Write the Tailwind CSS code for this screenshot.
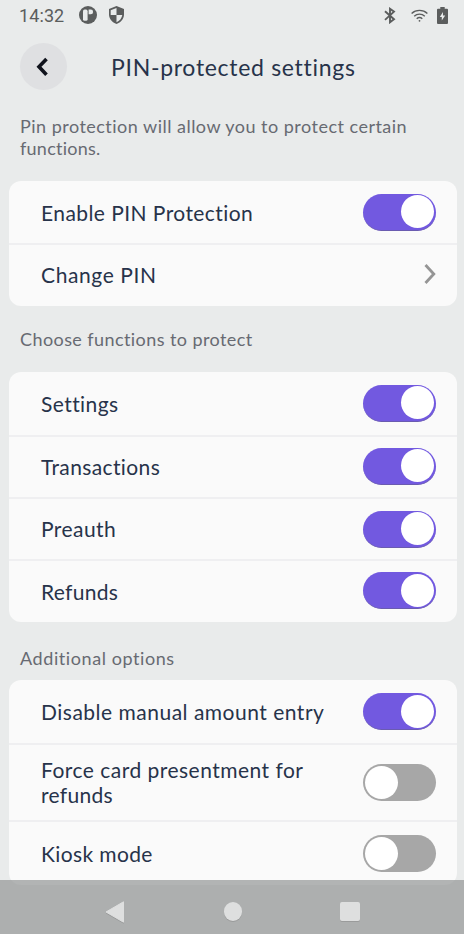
<!DOCTYPE html>
<html lang="en">
<head>
<meta charset="utf-8">
<title>PIN-protected settings</title>
<script src="https://cdn.jsdelivr.net/npm/@tailwindcss/browser@4"></script>
</head>
<body class="h-[934px] overflow-hidden bg-[#e9ebeb] font-['Lato',sans-serif] text-[#27334a]">
<div class="relative flex h-[934px] w-[464px] flex-col overflow-hidden">

  <!-- Status bar -->
  <header class="flex h-[30px] shrink-0 items-center pl-[19px] pr-[16px] text-[#5b5d5d]">
    <span class="w-[60px] pt-px font-['Roboto',sans-serif] text-[18px] leading-[30px] tracking-[0.1px]">14:32</span>
    <svg class="size-[18px]" viewBox="0 0 18 18"><circle cx="9" cy="9" r="9" fill="#5b5d5d"/><rect x="4" y="3.6" width="4.6" height="11.2" rx="1.6" fill="#e9ebeb"/><path d="M9.6 3.6h2.2a2.300 2.300 0 0 1 0 4.600H9.6z" fill="#e9ebeb"/></svg>
    <svg class="ml-[12px] h-[18px] w-[15px]" viewBox="0 0 15 18"><path d="M7.5 0 0 3v5.3C0 12.700 3.200 16.800 7.500 18c4.300-1.200 7.500-5.300 7.500-9.700V3z" fill="#5b5d5d"/><path d="M7.500 2v7h5.800c-.5 3.300-2.800 6.100-5.800 7.200V9H1.700V4.300z" fill="#e9ebeb"/></svg>
    <svg class="ml-auto h-[17px] w-[12px]" viewBox="0 0 12 17" fill="none" stroke="#5b5d5d" stroke-width="1.900"><path d="M1 4.200 10 12.300 6 15.300V1.800l4 2.900-9 8.200"/></svg>
    <svg class="ml-[15px] h-[13px] w-[17px]" viewBox="0 0 17 13" fill="none" stroke="#5b5d5d" stroke-width="1.400"><path d="M.6 4.500a11.500 11.500 0 0 1 15.800 0M3.200 7.200a7.800 7.800 0 0 1 10.600 0M5.700 9.700a4.200 4.200 0 0 1 5.600 0"/><circle cx="8.500" cy="11.800" r=".9" fill="#5b5d5d" stroke="none"/></svg>
    <svg class="ml-[9px] h-[17px] w-[11px]" viewBox="0 0 11 17"><path d="M3.300 0h4.400v1.700H10a1 1 0 0 1 1 1V16a1 1 0 0 1-1 1H1a1 1 0 0 1-1-1V2.700a1 1 0 0 1 1-1h2.300z" fill="#5b5d5d"/><path d="M6 5 2.800 10h2v3.500L8.200 8.500H6z" fill="#e9ebeb"/></svg>
  </header>

  <!-- Title bar -->
  <div class="flex h-[74px] shrink-0 items-center pl-5">
    <button class="-mt-px flex size-[47px] items-center justify-center rounded-full bg-[#dfe0e2]" aria-label="Back">
      <svg class="mr-1 h-[20px] w-[14px]" viewBox="0 0 14 20" fill="none" stroke="#10131c" stroke-width="3.600"><path d="M11.500 2 4 9.800l7.500 7.900"/></svg>
    </button>
    <h1 class="ml-[44px] whitespace-nowrap text-[23px] leading-[28px] tracking-[0.7px]">PIN-protected settings</h1>
  </div>

  <p class="h-[77px] shrink-0 whitespace-nowrap pl-5 pt-[11px] text-[18px] leading-[22px] text-[#676a72]"><span class="tracking-[0.48px]">Pin protection will allow you to protect certain</span><br><span class="tracking-[0.25px]">functions.</span></p>

  <section class="ml-[9px] mr-[7px] flex h-[125px] shrink-0 flex-col overflow-hidden rounded-[12px] bg-[#fafafa] text-[21px]">
    <div class="flex h-[64px] shrink-0 items-center justify-between border-b-2 border-[#efeff1] pl-8 pr-[21px]">
      <span class="pt-[2px] tracking-[0.43px]">Enable PIN Protection</span>
      <span class="flex h-[37px] w-[73px] items-center justify-end rounded-full border-b border-[#6a5bb0] bg-[#7259e0] pr-[2px]"><i class="size-[33px] rounded-full bg-white"></i></span>
    </div>
    <div class="flex flex-1 items-center justify-between pb-[3px] pl-8 pr-[21px]">
      <span class="pt-[2px] tracking-[0.6px]">Change PIN</span>
      <svg class="h-[20px] w-[12px]" viewBox="0 0 12 20" fill="none" stroke="#959595" stroke-width="2.800"><path d="m1.500 1 8.300 9-8.300 9"/></svg>
    </div>
  </section>

  <h2 class="flex h-[66px] shrink-0 items-center pl-5 text-[18px] tracking-[0.42px] text-[#676a72]">Choose functions to protect</h2>

  <section class="ml-[9px] mr-[7px] flex h-[250px] shrink-0 flex-col overflow-hidden rounded-[12px] bg-[#fafafa] text-[21px]">
    <div class="flex h-[65px] shrink-0 items-center justify-between border-b-2 border-[#efeff1] pb-px pl-8 pr-[21px]">
      <span class="pt-[2px] tracking-[0.42px]">Settings</span>
      <span class="flex h-[37px] w-[73px] items-center justify-end rounded-full border-b border-[#6a5bb0] bg-[#7259e0] pr-[2px]"><i class="size-[33px] rounded-full bg-white"></i></span>
    </div>
    <div class="flex h-[62px] shrink-0 items-center justify-between border-b-2 border-[#efeff1] pb-[2px] pl-8 pr-[21px]">
      <span class="pt-px tracking-[0.38px]">Transactions</span>
      <span class="flex h-[37px] w-[73px] items-center justify-end rounded-full border-b border-[#6a5bb0] bg-[#7259e0] pr-[2px]"><i class="size-[33px] rounded-full bg-white"></i></span>
    </div>
    <div class="flex h-[62px] shrink-0 items-center justify-between border-b-2 border-[#efeff1] pl-8 pr-[21px]">
      <span class="tracking-[0.45px]">Preauth</span>
      <span class="flex h-[37px] w-[73px] items-center justify-end rounded-full border-b border-[#6a5bb0] bg-[#7259e0] pr-[2px]"><i class="size-[33px] rounded-full bg-white"></i></span>
    </div>
    <div class="flex flex-1 items-center justify-between pb-px pl-8 pr-[21px]">
      <span class="pt-px tracking-[0.3px]">Refunds</span>
      <span class="mb-px flex h-[37px] w-[73px] items-center justify-end rounded-full border-b border-[#6a5bb0] bg-[#7259e0] pr-[2px]"><i class="size-[33px] rounded-full bg-white"></i></span>
    </div>
  </section>

  <h2 class="flex h-[58px] shrink-0 items-center pl-5 pt-[14px] text-[18px] tracking-[0.58px] text-[#676a72]">Additional options</h2>

  <section class="ml-[9px] mr-[7px] flex h-[205px] shrink-0 flex-col overflow-hidden rounded-[12px] bg-[#fafafa] text-[21px]">
    <div class="flex h-[65px] shrink-0 items-center justify-between border-b-2 border-[#efeff1] pl-8 pr-[21px]">
      <span class="whitespace-nowrap tracking-[0.5px]">Disable manual amount entry</span>
      <span class="flex h-[37px] w-[73px] items-center justify-end rounded-full border-b border-[#6a5bb0] bg-[#7259e0] pr-[2px]"><i class="size-[33px] rounded-full bg-white"></i></span>
    </div>
    <div class="flex h-[77px] shrink-0 items-center justify-between border-b-2 border-[#efeff1] pl-8 pr-[21px]">
      <span class="-mt-[2px] whitespace-nowrap leading-[25px]"><span class="tracking-[0.48px]">Force card presentment for</span><br><span class="tracking-[0.3px]">refunds</span></span>
      <span class="flex h-[37px] w-[73px] items-center rounded-full bg-[#a7a7a7] pl-[2px]"><i class="size-[33px] rounded-full bg-white"></i></span>
    </div>
    <div class="flex h-[62px] shrink-0 items-center justify-between pl-8 pr-[21px]">
      <span class="pt-[2px] tracking-[0.38px]">Kiosk mode</span>
      <span class="flex h-[37px] w-[73px] items-center rounded-full bg-[#a7a7a7] pl-[2px]"><i class="size-[33px] rounded-full bg-white"></i></span>
    </div>
  </section>

  <!-- Translucent system navigation bar over the scrolling content -->
  <nav class="absolute inset-x-0 bottom-0 flex h-[54px] items-center bg-[#939595]/70 pl-[105px] pt-[9px]">
    <svg class="h-[22px] w-[20px] drop-shadow-[0_1px_0_#9a9b9b]" viewBox="0 0 20 22"><path d="M18.500.8v20.400L1 11z" fill="#dedfdf" stroke="#dedfdf" stroke-linejoin="round"/></svg>
    <span class="ml-[98.500px] size-[18.500px] rounded-full bg-[#dedfdf] shadow-[0_1px_0_#9a9b9b]"></span>
    <span class="ml-[98px] h-[19px] w-[20px] rounded-[2px] bg-[#dedfdf] shadow-[0_1px_0_#9a9b9b]"></span>
  </nav>
</div>
</body>
</html>
